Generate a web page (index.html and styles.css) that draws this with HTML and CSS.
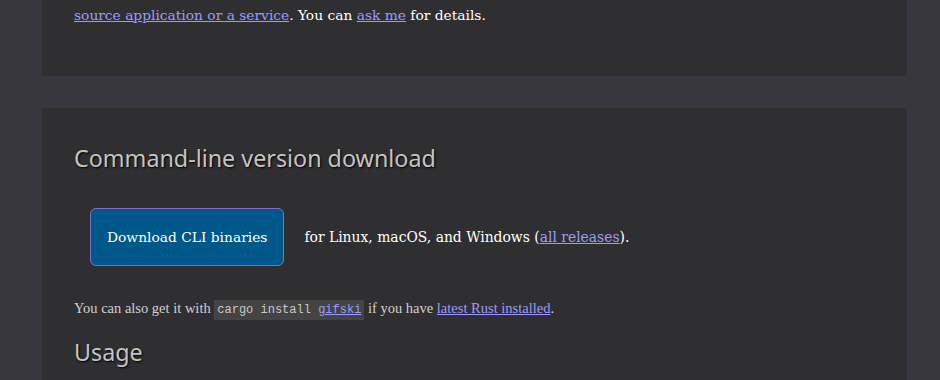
FILE: index.html
```html
<!DOCTYPE html>
<html lang="en">
<head>
<meta charset="UTF-8">
<meta name="viewport" content="width=device-width, initial-scale=1.0">
<title>gifski</title>
<link rel="stylesheet" href="styles.css">
</head>
<body>
<div class="page">
  <section class="card card-top">
    <p class="lead"><a href="#">source application or a service</a>. You can <a href="#">ask me</a> for details.</p>
  </section>

  <section class="card card-main">
    <h2>Command-line version download</h2>
    <div class="download-row">
      <a href="#" class="button">Download CLI binaries</a>
      <span class="lead">for Linux, macOS, and Windows (<a href="#">all releases</a>).</span>
    </div>
    <p class="small">You can also get it with <code>cargo install <a href="#">gifski</a></code> if you have <a href="#">latest Rust installed</a>.</p>
    <h2 class="usage">Usage</h2>
  </section>
</div>
</body>
</html>
```

FILE: styles.css
```css
body {
  margin: 0;
  padding: 0;
  background-color: #38373f;
  color: #ffffff;
  font-family: "DejaVu Serif", Georgia, serif;
  height: 380px;
  overflow: hidden;
}
.page {
  width: 865px;
  margin: 0 0 0 42px;
  display: flex;
  flex-direction: column;
  gap: 32px;
}
.card {
  background-color: #2f2f31;
  padding: 0 32px 0 32px;
}
.card-top {
  height: 76px;
}
.card-main {
  height: 272px;
}
.lead {
  font-size: 13.8px;
  margin: 0;
}
.card-top .lead {
  padding-top: 7px;
}
.download-row .lead {
  font-size: 13.9px;
}
a {
  color: #9b9bff;
}
h2 {
  font-family: "Noto Sans", "Open Sans", sans-serif;
  font-weight: normal;
  font-size: 23.3px;
  color: #c4c4c4;
  text-shadow: 1px 1px 2px #000;
  margin: 0;
  padding-top: 34px;
}
.download-row {
  display: flex;
  align-items: center;
  gap: 20px;
  margin: 34px 0 0 16px;
}
.button {
  display: inline-block;
  background-color: #00578a;
  border: 1px solid #7a70c8;
  border-radius: 6px;
  color: #fff;
  text-decoration: none;
  padding: 20px 16px;
  font-size: 13.8px;
}
.small {
  font-family: "Liberation Serif", serif;
  font-size: 14.5px;
  color: #d0d0d0;
  margin: 34px 0 0 0;
}
code {
  font-family: "Liberation Mono", monospace;
  font-size: 12px;
  background-color: #444;
  color: #c8c8c8;
  padding: 3px 3px;
}
.usage {
  padding-top: 19px;
}
```
